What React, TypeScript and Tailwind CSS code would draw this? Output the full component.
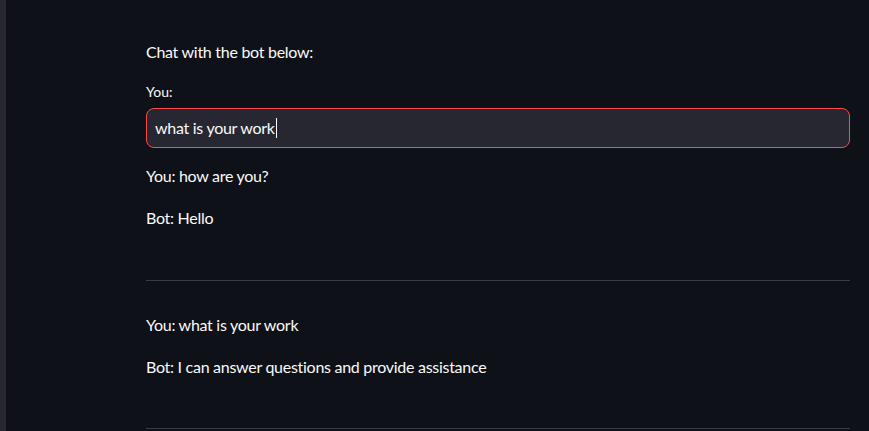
import React from 'react';

interface Exchange {
  you: string;
  bot: string;
}

const history: Exchange[] = [
  { you: "how are you?", bot: "Hello" },
  { you: "what is your work", bot: "I can answer questions and provide assistance" },
];

export default function App() {
  return (
    <div className="flex h-[431px] w-full overflow-hidden bg-[#0e1117] text-[#fafafa] font-['Lato',sans-serif] tracking-[-0.28px]">
      <div className="w-[6px] shrink-0 bg-[#262730]" />
      <main className="flex-1 pl-[140px] pr-[19px] pt-[39px]">
        <p className="text-base leading-[26px]">Chat with the bot below:</p>
        <label className="mt-[17px] block text-sm leading-5 tracking-normal">You:</label>
        <div className="mt-[6px] flex h-10 items-center rounded-lg border border-[#ff4b4b] bg-[#262730] px-2">
          <span className="text-base">what is your work</span>
          <span className="ml-px h-5 w-px bg-[#fafafa]" />
        </div>
        {history.map((item, i) => (
          <div key={i} className={i === 0 ? "pt-[15px]" : "pt-[31px]"}>
            <p className="text-base leading-[26px]">You: {item.you}</p>
            <p className="mt-4 text-base leading-[26px]">Bot: {item.bot}</p>
            <hr className={`${i === 0 ? "mt-[49px]" : "mt-[48px]"} border-0 border-t border-[#3a3b42]`} />
          </div>
        ))}
      </main>
    </div>
  );
}
